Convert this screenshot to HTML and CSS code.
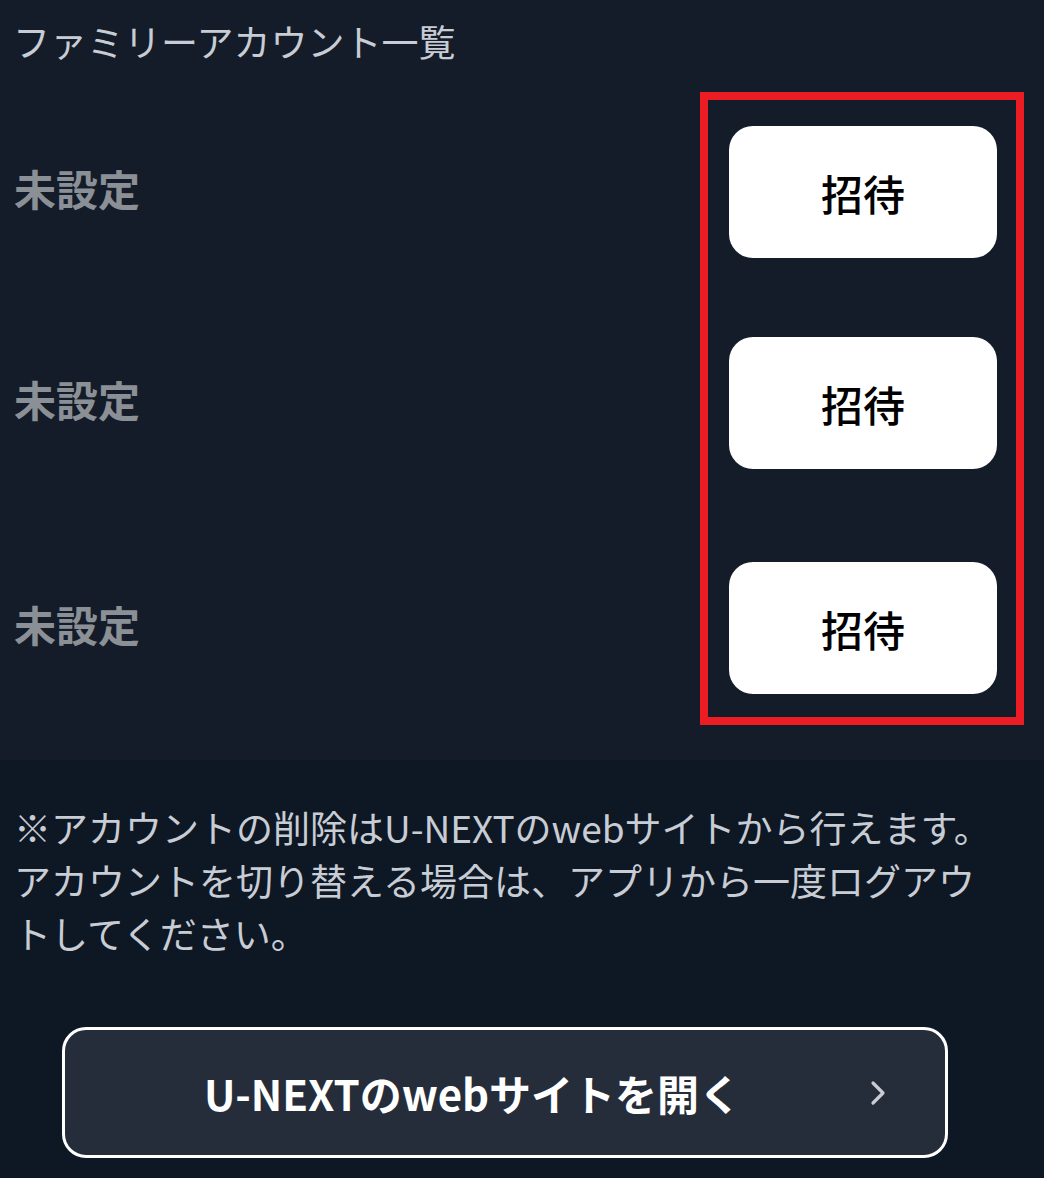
FILE: index.html
```html
<!DOCTYPE html>
<html lang="ja">
<head>
  <meta charset="UTF-8">
  <meta name="viewport" content="width=device-width, initial-scale=1.0">
  <title>ファミリーアカウント一覧</title>
  <link rel="stylesheet" href="styles.css">
</head>
<body>
  <section class="family">
    <h1 class="family-title">ファミリーアカウント一覧</h1>

    <div class="account-list">
      <div class="highlight"></div>
      <div class="account-row">
        <span class="account-name">未設定</span>
        <button class="invite-btn">招待</button>
      </div>
      <div class="account-row">
        <span class="account-name">未設定</span>
        <button class="invite-btn">招待</button>
      </div>
      <div class="account-row">
        <span class="account-name">未設定</span>
        <button class="invite-btn">招待</button>
      </div>
    </div>
  </section>

  <section class="notice">
    <p class="notice-text"><span class="notice-first">※アカウントの削除はU-NEXTのwebサイトから行えます。</span><br>アカウントを切り替える場合は、アプリから一度ログアウトしてください。</p>

    <a class="web-btn" href="#">
      <span class="web-btn-label">U-NEXTのwebサイトを開く</span>
      <svg class="chevron" width="16" height="26" viewBox="0 0 16 26">
        <polyline points="3,3 13,13 3,23" fill="none" stroke="#c9ccd3" stroke-width="3.2" stroke-linecap="round" stroke-linejoin="round"/>
      </svg>
    </a>
  </section>
</body>
</html>
```

FILE: styles.css
```css
body {
  margin: 0;
  background-color: #0e1824;
  font-family: "Noto Sans CJK JP", "Noto Sans", sans-serif;
}

.family {
  background-color: #141c29;
  padding: 0 0 66px;
}

.family-title {
  margin: 0;
  padding: 16px 16px 0 13px;
  font-size: 37px;
  font-weight: 400;
  line-height: 50px;
  color: #c8ccd4;
}

.account-list {
  position: relative;
  margin-top: 60px;
}

.account-row {
  display: flex;
  justify-content: space-between;
  align-items: center;
  padding: 0 47px 0 14px;
}

.account-row + .account-row {
  margin-top: 79px;
}

.account-row:last-child {
  margin-top: 93px;
}

.account-name {
  margin-bottom: 10px;
  font-size: 42px;
  font-weight: 700;
  color: #8b9097;
}

.invite-btn {
  width: 268px;
  height: 132px;
  border: none;
  border-radius: 24px;
  background-color: #fff;
  color: #000;
  font-family: inherit;
  font-size: 42px;
  font-weight: 500;
  cursor: pointer;
}

/* red annotation frame */
.highlight {
  position: absolute;
  left: 700px;
  top: -34px;
  width: 308px;
  height: 617px;
  border: 8px solid #ec1c24;
  pointer-events: none;
}

.notice {
  padding: 41px 50px 20px 14px;
}

.notice-text {
  margin: 0;
  font-size: 37px;
  line-height: 53px;
  color: #c8ccd4;
}

.notice-first {
  white-space: nowrap;
}

.web-btn {
  display: flex;
  align-items: center;
  width: 870px;
  height: 125px;
  margin: 67px 0 0 48px;
  padding-left: 10px;
  border: 3px solid #fff;
  border-radius: 24px;
  background-color: #262d3a;
  text-decoration: none;
}

.web-btn-label {
  flex: 1;
  text-align: center;
  font-size: 42px;
  font-weight: 700;
  color: #fff;
}

.chevron {
  margin-right: 59px;
}
```
